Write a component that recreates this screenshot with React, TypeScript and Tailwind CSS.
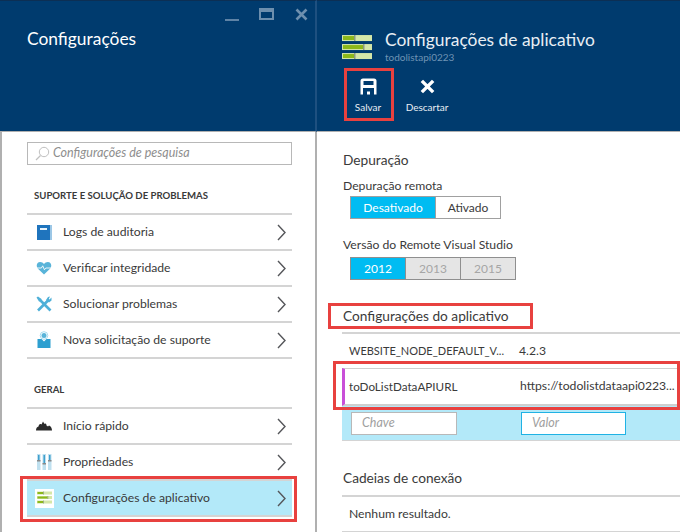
import React from 'react'

const font = "font-['Lato','Open_Sans',sans-serif]"

const SlidersIcon = ({ size = 30 }: { size?: number }) => (
  <svg width={size} height={size * 0.87} viewBox="0 0 30 26">
    <rect x="0" y="1" width="30" height="6" fill="#d4e7a8" />
    <rect x="1" y="2" width="11" height="4" fill="#8cb81a" />
    <rect x="12" y="1" width="1.5" height="6" fill="#8a9a80" />
    <rect x="0" y="10" width="30" height="6" fill="#d4e7a8" />
    <rect x="1" y="11" width="20" height="4" fill="#8cb81a" />
    <rect x="21" y="10" width="1.5" height="6" fill="#8a9a80" />
    <rect x="0" y="19" width="30" height="6" fill="#d4e7a8" />
    <rect x="1" y="20" width="11" height="4" fill="#8cb81a" />
    <rect x="12" y="19" width="1.5" height="6" fill="#8a9a80" />
  </svg>
)

const BookIcon = () => (
  <svg width="15" height="15" viewBox="0 0 15 15">
    <rect x="0" y="0" width="15" height="15" fill="#1f74bd" />
    <rect x="13" y="0" width="2" height="15" fill="#9cc7e6" />
    <rect x="3" y="3" width="7" height="2" fill="#e8f3fb" />
  </svg>
)

const HeartIcon = () => (
  <svg width="16" height="14" viewBox="0 0 18 16">
    <path d="M9 15.5 L1.8 8.5 C-0.5 5 1 1 4.6 1 C6.5 1 8 2 9 3.4 C10 2 11.5 1 13.4 1 C17 1 18.5 5 16.2 8.5 Z" fill="#59b4d9" />
    <path d="M0 8 H6 L7.5 5.5 L9.5 10 L11 8 H18" fill="none" stroke="#fff" strokeWidth="1" />
  </svg>
)

const ToolsIcon = () => (
  <svg width="16" height="16" viewBox="0 0 16 16">
    <path d="M2 14.5 L12 4.5" stroke="#4fb0d8" strokeWidth="2.6" />
    <path d="M14.5 14.5 L4 4" stroke="#4fb0d8" strokeWidth="2.6" />
    <path d="M0.5 1.5 L2 0.5 L5.5 3 L5 5 L3 5.5 Z" fill="#4fb0d8" />
    <path d="M15.5 1.5 L15.5 4.5 L13 6.5 L10 4 L12 1 L14 0.5 L12.8 3 L13.5 3.5 Z" fill="#4fb0d8" />
  </svg>
)

const SupportIcon = () => (
  <svg width="14" height="18" viewBox="0 0 14 18">
    <circle cx="7" cy="4.5" r="3.8" fill="none" stroke="#a6dcf0" strokeWidth="1" />
    <circle cx="7" cy="4.5" r="2.5" fill="#59b4d9" />
    <path d="M0.5 8 H4.5 L7 10.5 L9.5 8 H13.5 V17 H0.5 Z" fill="#2d9fd0" />
  </svg>
)

const CloudIcon = () => (
  <svg width="16" height="10" viewBox="0 0 16 10">
    <path d="M0 9.5 C0 7 1 6 2.5 5.5 C3 3 4.5 2.5 5.5 3.5 L7 0.5 L8.5 3 C9.5 2 10.5 3 10.5 4.5 L12 5.5 L13 4.5 C15 5 16 7.5 16 9.5 Z" fill="#2b2b2b" />
  </svg>
)

const PropsIcon = () => (
  <svg width="15" height="16" viewBox="0 0 15 16">
    {[0, 5.5, 11].map((x, i) => (
      <g key={x}>
        <rect x={x} y="0" width="3.5" height="16" fill="#bfe0ef" />
        <rect x={x + 1} y="1" width="1.5" height={i === 1 ? 8 : 5} fill="#3f9fce" />
        <rect x={x} y={i === 1 ? 9 : 6} width="3.5" height="1.5" fill="#8a8a8a" />
      </g>
    ))}
  </svg>
)

const Chevron = () => (
  <svg width="9" height="17" viewBox="0 0 9 17" className="shrink-0">
    <path d="M1 1 L8 8.5 L1 16" fill="none" stroke="#55565a" strokeWidth="1.4" />
  </svg>
)

const Row = ({ icon, label, active }: { icon: React.ReactNode; label: string; active?: boolean }) => (
  <div className={`flex h-9 items-center border-b-2 border-[#d4d4d4] pr-[6px] ${active ? 'bg-[#b3e9f9]' : ''}`}>
    <div className="flex w-[36px] shrink-0 justify-center pr-[2px]">{icon}</div>
    <span className="flex-1 pt-[1px] text-[12.2px] text-[#3a3a3a]">{label}</span>
    <Chevron />
  </div>
)

const SectionLabel = ({ children }: { children: React.ReactNode }) => (
  <div className="h-[20px] pl-[7px] text-[9.6px] leading-[14px] font-bold text-[#3a3a3a]">{children}</div>
)

const Heading = ({ children, className = '' }: { children: React.ReactNode; className?: string }) => (
  <div className={`text-[13.7px] leading-[20px] text-[#3a3a3a] ${className}`}>{children}</div>
)

const Segment = ({ label, state, className = '' }: { label: string; state: 'on' | 'off' | 'disabled'; className?: string }) => {
  const tone =
    state === 'on' ? 'bg-[#00bcf2] text-white' : state === 'disabled' ? 'bg-[#e5e5e5] text-[#a6a6a6]' : 'bg-white text-[#3a3a3a]'
  return <div className={`flex items-center justify-center text-[12px] ${tone} ${className}`}>{label}</div>
}

export default function App() {
  return (
    <div className={`${font} relative flex h-[532px] w-[680px] overflow-hidden bg-white`}>
      {/* left blade */}
      <div className="flex w-[317px] shrink-0 flex-col">
        <div className="relative h-[132px] shrink-0 border-t border-r-2 border-b border-[#0c2f54] border-r-[#1e5080] border-b-[#b0b0b0] bg-[#003b6e] pt-[26px] pl-[27px] text-[17.4px] leading-[24px] text-white">
          Configurações
          <div className="absolute top-[7px] right-[7px] flex items-start gap-[20px]">
            <div className="mt-[11px] h-[2px] w-[14px] bg-[#5e83a6]" />
            <div className="h-[12px] w-[15px] border-2 border-t-4 border-[#6d8fae]" />
            <svg width="13" height="13" viewBox="0 0 13 13" className="ml-[1px]">
              <path d="M1.5 1.5 L11.5 11.5 M11.5 1.5 L1.5 11.5" stroke="#6d8fae" strokeWidth="2.6" />
            </svg>
          </div>
        </div>
        <div className="flex-1 border-x-2 border-[#b0b0b0] pt-[10px] pr-[23px] pl-[25px]">
          <div className="flex h-[23px] items-center border border-[#b8b8b8] pl-[7px] text-[12.5px] text-[#8e8e8e] italic">
            <svg width="15" height="15" viewBox="0 0 15 15" className="mr-[3px]">
              <circle cx="9" cy="6" r="4.7" fill="none" stroke="#c0c0c0" strokeWidth="1" />
              <path d="M5.5 9.5 L1 14" stroke="#c0c0c0" strokeWidth="1.2" />
            </svg>
            Configurações de pesquisa
          </div>
          <div className="pt-[24px]">
            <SectionLabel>SUPORTE E SOLUÇÃO DE PROBLEMAS</SectionLabel>
          </div>
          <div className="mt-[4px] border-t-2 border-[#d4d4d4]">
            <Row icon={<BookIcon />} label="Logs de auditoria" />
            <Row icon={<HeartIcon />} label="Verificar integridade" />
            <Row icon={<ToolsIcon />} label="Solucionar problemas" />
            <Row icon={<SupportIcon />} label="Nova solicitação de suporte" />
          </div>
          <div className="pt-[24px]">
            <SectionLabel>GERAL</SectionLabel>
          </div>
          <div className="mt-[4px] border-t-2 border-[#d4d4d4]">
            <Row icon={<CloudIcon />} label="Início rápido" />
            <Row icon={<PropsIcon />} label="Propriedades" />
            <Row
              active
              icon={
                <div className="flex h-[19px] w-[19px] items-center justify-center bg-white">
                  <SlidersIcon size={15} />
                </div>
              }
              label="Configurações de aplicativo"
            />
          </div>
        </div>
      </div>

      {/* right blade */}
      <div className="relative min-w-0 flex-1">
        <div className="flex h-[132px] flex-col border-t border-b border-[#0c2f54] border-b-[#b0b0b0] bg-[#003b6e] pt-[29px] pl-[25px]">
          <div className="flex">
            <div className="pt-[4px]">
              <SlidersIcon />
            </div>
            <div className="pl-[13px]">
              <div className="text-[17.4px] leading-[20px] text-[#e8eef4]">Configurações de aplicativo</div>
              <div className="text-[10px] leading-[15px] text-[#6f93b4]">todolistapi0223</div>
            </div>
          </div>
          <div className="flex pt-[8px] pl-[1px] text-[10px] text-[#e8eef4]">
            <div className="flex w-[50px] flex-col items-center pt-[5px]">
              <svg width="17" height="17" viewBox="0 0 17 17">
                <path fillRule="evenodd" d="M3 0.5 H14 A2.5 2.5 0 0 1 16.5 3 V16.5 H0.5 V3 A2.5 2.5 0 0 1 3 0.5 Z M3.5 3 V7 H13.5 V3 Z M3 10 V16.5 H7 V13.5 H10 V16.5 H14 V10 Z" fill="#fff" />
              </svg>
              <span className="pt-[6px] leading-[12px]">Salvar</span>
            </div>
            <div className="flex w-[68px] flex-col items-center pt-[5px]">
              <svg width="17" height="17" viewBox="0 0 18 18">
                <path d="M3 3 L15 15 M15 3 L3 15" stroke="#fff" strokeWidth="3.6" />
              </svg>
              <span className="pt-[6px] leading-[12px]">Descartar</span>
            </div>
          </div>
        </div>

        <div className="pt-[18px] pl-[26px]">
          <Heading>Depuração</Heading>
          <div className="pt-[7px] text-[12.2px] leading-[18px] text-[#3a3a3a]">Depuração remota</div>
          <div className="mt-[1px] ml-[7px] flex h-[23px] w-[151px] border border-[#a0a0a0]">
            <Segment label="Desativado" state="on" className="w-[85px] border-r border-[#a0a0a0]" />
            <Segment label="Ativado" state="off" className="flex-1" />
          </div>
          <div className="pt-[17px] pb-[1px] text-[12.2px] leading-[18px] text-[#3a3a3a]">Versão do Remote Visual Studio</div>
          <div className="mt-[2px] ml-[7px] flex h-[23px] w-[166px] border border-[#8f8f8f]">
            <Segment label="2012" state="on" className="w-[55px] border-r border-[#8f8f8f]" />
            <Segment label="2013" state="disabled" className="w-[55px] border-r border-[#8f8f8f]" />
            <Segment label="2015" state="disabled" className="flex-1" />
          </div>
          <Heading className="pt-[26px] pb-[1px]">Configurações do aplicativo</Heading>
        </div>

        <div className="mt-[5px] ml-[25px] border-t-2 border-[#d4d4d4] text-[11.7px] text-[#3a3a3a]">
          <div className="flex h-[34px] items-center pl-[7px]">
            <span className="w-[170px] text-[11px]">WEBSITE_NODE_DEFAULT_V...</span>
            <span className="text-[12.2px]">4.2.3</span>
          </div>
          <div className="flex h-[38px] items-center border-t border-b-2 border-l-[3px] border-[#cfcfcf] border-l-[#c94fd8] pl-[4px]">
            <span className="w-[171px]">toDoListDataAPIURL</span>
            <span className="text-[12.2px] whitespace-nowrap">https://todolistdataapi0223...</span>
          </div>
          <div className="flex h-[35px] items-center gap-[64px] border-b border-[#d4d4d4] bg-[#b3e9f9] pl-[9px] text-[12.5px] text-[#a0a0a0] italic">
            <div className="flex h-[23px] w-[106px] items-center border border-[#b8b8b8] bg-white pl-[10px]">Chave</div>
            <div className="flex h-[23px] w-[105px] items-center border border-[#20b2e4] bg-white pl-[10px]">Valor</div>
          </div>
        </div>

        <div className="pt-[27px] pl-[25px]">
          <Heading className="pb-[1px] pl-[1px]">Cadeias de conexão</Heading>
          <div className="mt-[6px] flex h-[38px] items-center border-y-2 border-[#d4d4d4] pl-[7px] text-[12.2px] text-[#3a3a3a]">Nenhum resultado.</div>
        </div>

        {/* annotation boxes */}
        <div className="absolute top-[68px] left-[27px] h-[53px] w-[50px] border-[3px] border-[#e8413f]" />
        <div className="absolute top-[303px] left-[11px] h-[26px] w-[205px] border-[3px] border-[#e8413f]" />
        <div className="absolute top-[361px] left-[16px] h-[49px] w-[347px] border-[3px] border-[#e8413f]" />
      </div>

      <div className="absolute top-[476px] left-[20px] h-[46px] w-[277px] border-[3px] border-[#e8413f]" />
    </div>
  )
}
